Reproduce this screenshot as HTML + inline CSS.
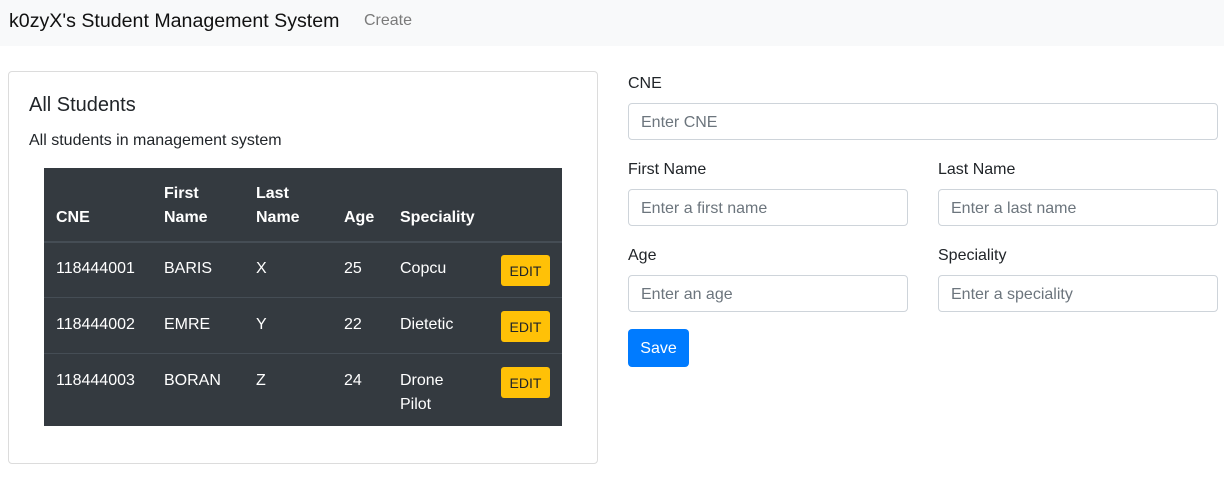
<!DOCTYPE html>
<html><head><style>
*{box-sizing:border-box;margin:0;padding:0}
body{width:1224px;height:487px;background:#fff;font-family:"Liberation Sans",sans-serif;color:#212529;position:relative;overflow:hidden}
.a{position:absolute;white-space:nowrap}
.nav{position:absolute;left:0;top:0;width:1224px;height:46px;background:#f8f9fa}
.card{position:absolute;left:8px;top:71px;width:590px;height:393px;border:1px solid #dcdcdc;border-radius:4px}
.tbl{position:absolute;left:44px;top:168px;width:518px;height:258px;background:#343a40}
.line{position:absolute;left:0;width:518px;height:1px;background:#454d55}
.th{position:absolute;color:#fff;font-weight:bold;font-size:16px;line-height:24px}
.td{position:absolute;color:#fff;font-size:16px;line-height:24px}
.edit{position:absolute;left:457px;width:49px;height:31px;background:#ffc107;border-radius:3px;font-size:14px;color:#212529;text-align:center;line-height:33px}
.lbl{position:absolute;font-size:16px}
.inp{position:absolute;height:37px;border:1px solid #ced4da;border-radius:4px;font-size:16px;color:#6c757d;padding-left:12px;line-height:37px}
</style></head><body>
<div class="nav"></div>
<div class="a" style="left:9px;top:9px;font-size:19.6px;line-height:24px;color:#111">k0zyX's Student Management System</div>
<div class="a" style="left:364px;top:11px;font-size:16px;line-height:20px;color:#7a7a7a">Create</div>
<div class="card"></div>
<div class="a" style="left:29px;top:93px;font-size:20px;line-height:24px;font-weight:500">All Students</div>
<div class="a" style="left:29px;top:131px;font-size:16px;line-height:20px">All students in management system</div>
<div class="tbl">
<div class="th" style="left:12px;top:38px">CNE</div>
<div class="th" style="left:120px;top:14px">First<br>Name</div>
<div class="th" style="left:212px;top:14px">Last<br>Name</div>
<div class="th" style="left:300px;top:38px">Age</div>
<div class="th" style="left:356px;top:38px">Speciality</div>
<div class="line" style="top:73px;height:2px"></div>
<div class="td" style="left:12px;top:89px">118444001</div><div class="td" style="left:120px;top:89px">BARIS</div><div class="td" style="left:212px;top:89px">X</div><div class="td" style="left:300px;top:89px">25</div><div class="td" style="left:356px;top:89px">Copcu</div><div class="edit" style="top:87px">EDIT</div>
<div class="line" style="top:129px"></div>
<div class="td" style="left:12px;top:145px">118444002</div><div class="td" style="left:120px;top:145px">EMRE</div><div class="td" style="left:212px;top:145px">Y</div><div class="td" style="left:300px;top:145px">22</div><div class="td" style="left:356px;top:145px">Dietetic</div><div class="edit" style="top:143px">EDIT</div>
<div class="line" style="top:185px"></div>
<div class="td" style="left:12px;top:201px">118444003</div><div class="td" style="left:120px;top:201px">BORAN</div><div class="td" style="left:212px;top:201px">Z</div><div class="td" style="left:300px;top:201px">24</div><div class="td" style="left:356px;top:201px">Drone<br>Pilot</div><div class="edit" style="top:199px">EDIT</div>
</div>
<div class="lbl" style="left:628px;top:75px">CNE</div>
<div class="inp" style="left:628px;top:103px;width:590px">Enter CNE</div>
<div class="lbl" style="left:628px;top:161px">First Name</div>
<div class="lbl" style="left:938px;top:161px">Last Name</div>
<div class="inp" style="left:628px;top:189px;width:280px">Enter a first name</div>
<div class="inp" style="left:938px;top:189px;width:280px">Enter a last name</div>
<div class="lbl" style="left:628px;top:247px">Age</div>
<div class="lbl" style="left:938px;top:247px">Speciality</div>
<div class="inp" style="left:628px;top:275px;width:280px">Enter an age</div>
<div class="inp" style="left:938px;top:275px;width:280px">Enter a speciality</div>
<div class="a" style="left:628px;top:329px;width:61px;height:38px;background:#007bff;border-radius:4px;color:#fff;font-size:16px;line-height:40px;text-align:center">Save</div>
</body></html>
